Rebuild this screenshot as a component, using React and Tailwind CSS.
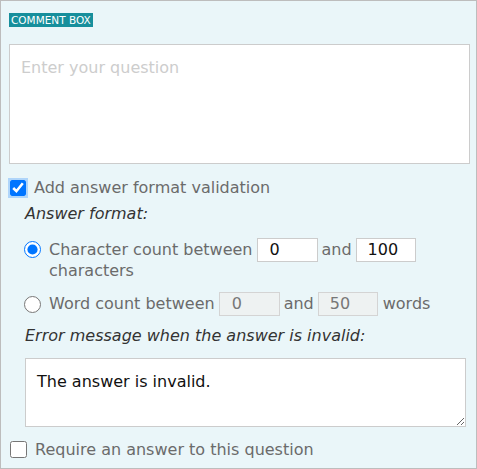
import React from "react";

export default function App() {
  const font = { fontFamily: '"DejaVu Sans", "Open Sans", sans-serif' };
  return (
    <div className="w-[477px] h-[469px] border border-[#bdbdbd] bg-[#eaf6f9] text-[16px] text-[#6b6b6b] box-border" style={font}>
      <div className="pt-[12px] pl-[8px]">
        <div className="w-fit bg-[#178f9c] text-white text-[10.5px] leading-[14px] px-[2px] font-medium">COMMENT BOX</div>
      </div>
      <div className="mt-[17px] ml-[8px] w-[461px] h-[120px] bg-white border border-[#cccccc] px-[11px] pt-[11px] text-[#cdcdcd] text-[16px]">
        Enter your question
      </div>
      <label className="flex items-center mt-[14px] ml-[9px] h-[19px]">
        <input type="checkbox" defaultChecked className="w-[16px] h-[16px] m-0 accent-[#0075ff] shadow-[0_0_0_2px_rgba(0,117,255,0.25)] rounded-[3px]" />
        <span className="ml-[8px]">Add answer format validation</span>
      </label>
      <div className="ml-[24px] mt-[7px] italic text-[#333] text-[16px] h-[20px] leading-[20px]">Answer format:</div>
      <div className="ml-[23px] mt-[14px] flex">
        <input type="radio" name="f" defaultChecked className="w-[17px] h-[17px] m-0 mt-[3px] accent-[#0075ff]" />
        <div className="ml-[8px] w-[390px]">
          <div className="flex items-center h-[23px]">
            <span>Character count between</span>
            <span className="ml-[4px] w-[61px] h-[24px] bg-white border border-[#cccccc] text-[#111] pl-[12px] leading-[22px]">0</span>
            <span className="ml-[4px]">and</span>
            <span className="ml-[4px] w-[60px] h-[24px] bg-white border border-[#cccccc] text-[#111] pl-[11px] leading-[22px]">100</span>
          </div>
          <div className="mt-[0px] leading-[20px]">characters</div>
        </div>
      </div>
      <div className="ml-[23px] mt-[11px] flex items-center h-[24px]">
        <input type="radio" name="f" className="w-[17px] h-[17px] m-0 accent-[#0075ff]" />
        <span className="ml-[8px]">Word count between</span>
        <span className="ml-[4px] w-[61px] h-[24px] bg-[#eef2f2] border border-[#d4d4d4] text-[#777] pl-[12px] leading-[22px]">0</span>
        <span className="ml-[4px]">and</span>
        <span className="ml-[4px] w-[60px] h-[24px] bg-[#eef2f2] border border-[#d4d4d4] text-[#777] pl-[11px] leading-[22px]">50</span>
        <span className="ml-[5px]">words</span>
      </div>
      <div className="ml-[24px] mt-[10px] italic text-[#333] text-[16px] h-[20px] leading-[20px]">Error message when the answer is invalid:</div>
      <textarea
        defaultValue="The answer is invalid."
        className="block ml-[24px] mt-[12px] w-[441px] h-[69px] bg-white border border-[#cccccc] px-[11px] pt-[11px] text-[#111] text-[16px] outline-none resize-y"
        style={font}
      />
      <label className="flex items-center mt-[13px] ml-[9px] h-[19px]">
        <input type="checkbox" className="w-[17px] h-[17px] m-0" />
        <span className="ml-[8px]">Require an answer to this question</span>
      </label>
    </div>
  );
}
